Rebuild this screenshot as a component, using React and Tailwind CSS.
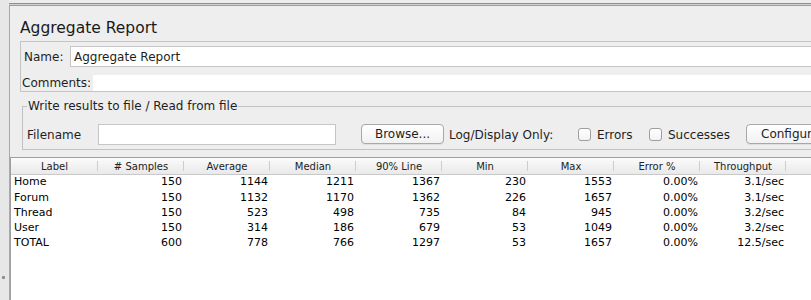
import React from 'react';

const cols = ['Label', '# Samples', 'Average', 'Median', '90% Line', 'Min', 'Max', 'Error %', 'Throughput', ''];
const widths = [87, 86, 86, 86, 86, 86, 86, 86, 86, 120];

const rows = [
    ['Home', '150', '1144', '1211', '1367', '230', '1553', '0.00%', '3.1/sec'],
    ['Forum', '150', '1132', '1170', '1362', '226', '1657', '0.00%', '3.1/sec'],
    ['Thread', '150', '523', '498', '735', '84', '945', '0.00%', '3.2/sec'],
    ['User', '150', '314', '186', '679', '53', '1049', '0.00%', '3.2/sec'],
    ['TOTAL', '600', '778', '766', '1297', '53', '1657', '0.00%', '12.5/sec'],
];

function Button({ children, className = '' }) {
    return (
        <div className={`h-[20px] rounded-[4px] border border-[#a8a8a8] bg-gradient-to-b from-white to-[#f1f1f1] shadow-[0_1px_0_rgba(0,0,0,0.06)] flex items-center justify-center text-[12px] text-[#1e1e1e] shrink-0 ${className}`}>
            {children}
        </div>
    );
}

function Checkbox() {
    return <div className="w-[13px] h-[13px] shrink-0 rounded-[3px] border border-[#9e9e9e] bg-gradient-to-b from-white to-[#f3f3f3]" />;
}

export default function App() {
    return (
        <div className="w-[811px] h-[300px] overflow-hidden bg-[#ececec] flex text-[#1e1e1e]" style={{ fontFamily: '"DejaVu Sans", Verdana, sans-serif' }}>
            {/* left split strip */}
            <div className="w-[9px] shrink-0 bg-[#e7e7e7] flex flex-col justify-end items-start pb-[21px] pl-[2px]">
                <div className="w-[3px] h-[3px] bg-[#8a8a8a] rounded-[1px]" />
            </div>

            <div className="flex-1 min-w-0 flex flex-col mt-[3px]">
                <div className="h-[1px] bg-[#8f8f8f]" />
                <div className="h-[1px] bg-[#d2d2d2]" />
                <div className="h-[1px] bg-[#9c9c9c]" />

                <div className="flex-1 min-h-0 flex flex-col bg-[#eeeeee] border-l border-[#a9a9a9]">
                    {/* title */}
                    <div className="mt-[12px] h-[20px] leading-[20px] text-[15.5px] text-[#1a1a1a] pl-[10px]">Aggregate Report</div>

                    {/* name / comments box */}
                    <div className="mt-[3px] ml-[10px] mr-[-40px] border border-[#c4c4c4] pt-[4px] pl-[1px]">
                        <div className="flex items-center h-[21px]">
                            <div className="w-[48px] shrink-0 pl-[2px] text-[12px]">Name:</div>
                            <div className="flex-1 h-[21px] bg-white border border-[#c6c6c6] border-r-0 flex items-center pl-[3px] text-[12px]">Aggregate Report</div>
                        </div>
                        <div className="flex items-center h-[16px] mt-[8px]">
                            <div className="w-[71px] shrink-0 text-[12px]">Comments:</div>
                            <div className="flex-1 h-[16px] bg-white" />
                        </div>
                    </div>

                    {/* write results fieldset */}
                    <fieldset className="mt-[7px] ml-[12px] mr-[-40px] border border-[#c2c2c2] px-[4px] pb-[4px]">
                        <legend className="px-[1px] text-[12px] leading-[14px] text-[#1e1e1e]">Write results to file / Read from file</legend>
                        <div className="mt-[11px] flex items-center h-[21px] text-[12px]">
                            <div className="w-[71px] shrink-0">Filename</div>
                            <div className="w-[238px] h-[21px] shrink-0 bg-white border border-[#c6c6c6]" />
                            <Button className="ml-[25px] w-[83px] -mt-[2px]">Browse...</Button>
                            <div className="ml-[5px] w-[129px] shrink-0">Log/Display Only:</div>
                            <Checkbox />
                            <div className="ml-[6px] w-[52px] shrink-0">Errors</div>
                            <Checkbox />
                            <div className="ml-[6px] w-[78px] shrink-0">Successes</div>
                            <Button className="w-[110px] -mt-[2px] justify-start pl-[14px]">Configure</Button>
                        </div>
                    </fieldset>

                    {/* results table */}
                    <div className="mt-[7px] flex-1 min-h-0 bg-white border-t border-l border-[#9f9f9f]">
                        <div className="flex h-[17px] bg-gradient-to-b from-[#fbfbfb] to-[#e9e9e9] border-b border-[#c9c9c9]">
                            {cols.map((c, i) => (
                                <div key={i} className="relative shrink-0 flex items-center justify-center text-[10px] text-[#222]" style={{ width: widths[i] }}>
                                    {c}
                                    {i < cols.length - 1 && <div className="absolute right-0 top-[3px] h-[10px] w-[1px] bg-[#cdcdcd]" />}
                                </div>
                            ))}
                        </div>
                        {rows.map((r, ri) => (
                            <div key={ri} className="flex h-[15.25px] items-center text-[11px] text-black">
                                {r.map((v, i) => (
                                    <div key={i} className={`shrink-0 ${i === 0 ? 'pl-[3px] text-left' : 'pr-[2px] text-right'}`} style={{ width: widths[i] }}>
                                        {v}
                                    </div>
                                ))}
                            </div>
                        ))}
                    </div>
                </div>
            </div>
        </div>
    );
}
